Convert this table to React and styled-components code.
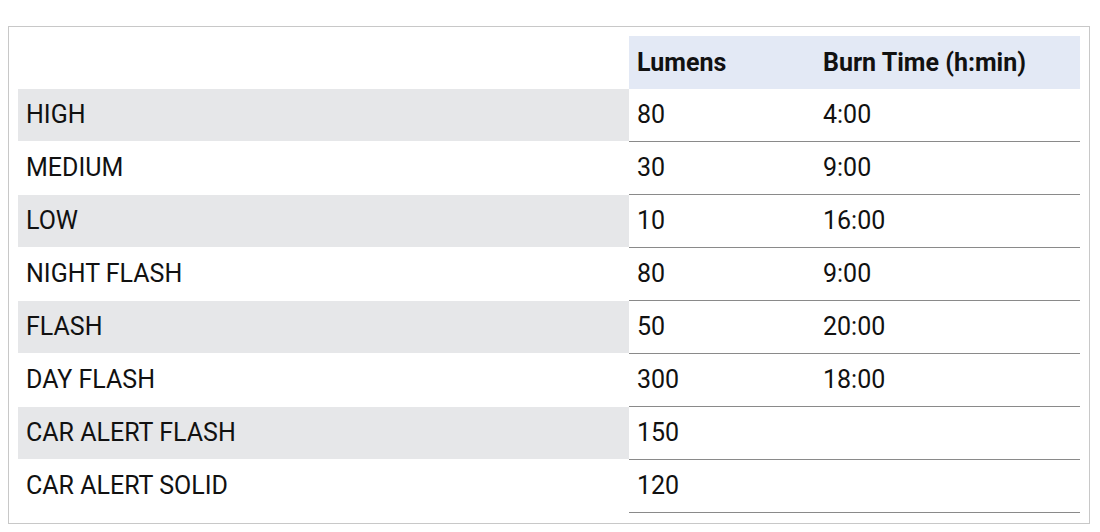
import React from "react";
import styled, { createGlobalStyle } from "styled-components";

const Global = createGlobalStyle`
  body {
    margin: 8px;
    font-family: Roboto, "Liberation Sans", Arial, sans-serif;
    color: #111;
    background: #fff;
  }
`;

const Box = styled.div`
  width: 1082px;
  box-sizing: border-box;
  margin-top: 18px;
  border: 1px solid #c8c8c8;
  padding: 9px 9px 10px;
`;

const Table = styled.div`
  display: grid;
  grid-template-columns: 611px 186px 1fr;
`;

const Cell = styled.div`
  height: 52px;
  box-sizing: content-box;
  display: flex;
  align-items: center;
  padding: 0 8px;
  font-size: 25px;
  line-height: 1;
`;

const Blank = styled(Cell)`
  height: 53px;
  background: #fff;
`;

const Head = styled(Cell)`
  height: 53px;
  padding-bottom: 1px;
  box-sizing: border-box;
  background: #e3e9f5;
  font-weight: 700;
`;

const Label = styled(Cell)`
  height: 50px;
  padding-bottom: 2px;
  background: ${(p) => (p.$shade ? "#e6e7e9" : "#fff")};
  border-bottom: 1px solid #fff;
`;

const Value = styled(Cell)`
  height: 50px;
  padding-bottom: 2px;
  border-bottom: 1px solid #8a8a8a;
`;

const rows = [
  ["HIGH", "80", "4:00"],
  ["MEDIUM", "30", "9:00"],
  ["LOW", "10", "16:00"],
  ["NIGHT FLASH", "80", "9:00"],
  ["FLASH", "50", "20:00"],
  ["DAY FLASH", "300", "18:00"],
  ["CAR ALERT FLASH", "150", ""],
  ["CAR ALERT SOLID", "120", ""],
];

export default function App() {
  return (
    <>
      <Global />
      <Box>
        <Table>
          <Blank />
          <Head>Lumens</Head>
          <Head>Burn Time (h:min)</Head>
          {rows.map(([mode, lumens, time], i) => (
            <React.Fragment key={mode}>
              <Label $shade={i % 2 === 0}>{mode}</Label>
              <Value>{lumens}</Value>
              <Value>{time}</Value>
            </React.Fragment>
          ))}
        </Table>
      </Box>
    </>
  );
}
